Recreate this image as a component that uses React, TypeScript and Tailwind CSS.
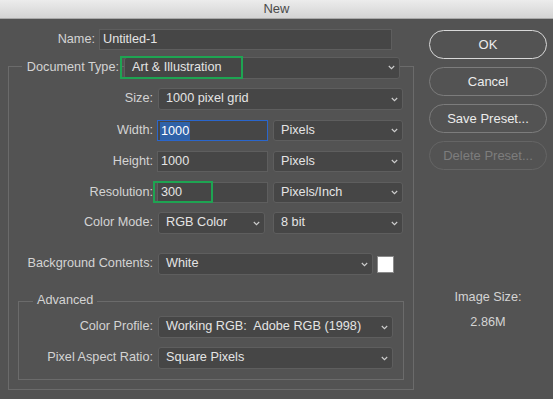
import React from "react";

const font = { fontFamily: '"Liberation Sans", Arial, sans-serif' };

function Chevron() {
  return (
    <svg width="7" height="5" viewBox="0 0 7 5" className="shrink-0">
      <path d="M0.8 1 L3.5 3.7 L6.2 1" fill="none" stroke="#cfcfcf" strokeWidth="1.1" />
    </svg>
  );
}

function Select({ w, text, h = "h-[22px]" }: { w: string; text: string; h?: string }) {
  return (
    <div
      className={`${w} ${h} shrink-0 flex items-center justify-between rounded-[3px] border border-[#5e5e5e] bg-[#464646] pl-[7px] pr-[4px] text-[#e4e4e4]`}
    >
      <span className="whitespace-pre">{text}</span>
      <Chevron />
    </div>
  );
}

function Input({ w, children, blue = false }: { w: string; children: React.ReactNode; blue?: boolean }) {
  return (
    <div
      className={`${w} h-[21px] shrink-0 flex items-center border ${
        blue ? "border-[#2a66cc]" : "border-[#5e5e5e]"
      } bg-[#464646] pl-[2px] text-[#e4e4e4]`}
    >
      {children}
    </div>
  );
}

function Label({ w, children }: { w: string; children: React.ReactNode }) {
  return <div className={`${w} shrink-0 text-right text-[#d4d4d4] whitespace-nowrap`}>{children}</div>;
}

function Button({ children, variant }: { children: React.ReactNode; variant: "default" | "normal" | "disabled" }) {
  const cls =
    variant === "default"
      ? "border-[#d8d8d8] text-[#ececec]"
      : variant === "normal"
      ? "border-[#7c7c7c] text-[#ececec]"
      : "border-[#656565] text-[#7d7d7d]";
  return (
    <div className={`h-[29px] w-[118px] rounded-full border ${cls} flex items-center justify-center text-[13px]`}>
      {children}
    </div>
  );
}

export default function App() {
  return (
    <div style={font} className="w-[553px] h-[399px] bg-[#535353] flex flex-col text-[12.7px] overflow-hidden">
      {/* Title bar */}
      <div className="h-[19px] shrink-0 bg-gradient-to-b from-[#ececec] to-[#d4d4d4] border-b border-[#a9a9a9] flex items-center justify-center text-[13px] text-[#4a4a4a]">
        New
      </div>

      <div className="flex flex-1">
        {/* Left column */}
        <div className="w-[414px] shrink-0 flex flex-col pt-[10px]">
          {/* Name row */}
          <div className="flex items-center h-[21px]">
            <Label w="w-[95px]">Name:</Label>
            <div className="ml-[4px] w-[293px] h-[21px] flex items-center border border-[#5e5e5e] bg-[#464646] pl-[3px] text-[#e4e4e4]">
              Untitled-1
            </div>
          </div>

          {/* Outer group box */}
          <div className="ml-[8px] mt-[16px] w-[406px] h-[324px] shrink-0 border border-[#6b6b6b] flex flex-col">
            {/* Document type row (legend) */}
            <div className="relative -mt-[11px] flex items-center h-[23px] shrink-0">
              <div className="ml-[13px] w-[98px] pr-[1px] text-right bg-[#535353] text-[#d4d4d4] whitespace-nowrap">
                Document Type:
              </div>
              <div className="ml-[4px]">
                <Select w="w-[276px]" text="Art & Illustration" h="h-[22px]" />
              </div>
              <div className="absolute left-[111px] top-0 w-[123px] h-[23px] border-2 border-[#1ea452] pointer-events-none" />
            </div>

            {/* Size */}
            <div className="mt-[9px] flex items-center h-[22px] shrink-0">
              <Label w="w-[144px]">Size:</Label>
              <div className="ml-[5px]">
                <Select w="w-[245px]" text="1000 pixel grid" />
              </div>
            </div>

            {/* Width */}
            <div className="mt-[10px] flex items-center h-[21px] shrink-0">
              <Label w="w-[144px]">Width:</Label>
              <div className="ml-[4px]">
                <Input w="w-[111px]" blue>
                  <span className="bg-[#2f62a8] text-white px-[1px] leading-[18px]">1000</span>
                </Input>
              </div>
              <div className="ml-[5px]">
                <Select w="w-[130px]" text="Pixels" h="h-[21px]" />
              </div>
            </div>

            {/* Height */}
            <div className="mt-[10px] flex items-center h-[21px] shrink-0">
              <Label w="w-[144px]">Height:</Label>
              <div className="ml-[4px]">
                <Input w="w-[111px]">
                  <span className="px-[1px]">1000</span>
                </Input>
              </div>
              <div className="ml-[5px]">
                <Select w="w-[130px]" text="Pixels" h="h-[21px]" />
              </div>
            </div>

            {/* Resolution */}
            <div className="relative mt-[10px] flex items-center h-[21px] shrink-0">
              <Label w="w-[144px]">Resolution:</Label>
              <div className="ml-[4px]">
                <Input w="w-[111px]">
                  <span className="px-[1px]">300</span>
                </Input>
              </div>
              <div className="ml-[5px]">
                <Select w="w-[130px]" text="Pixels/Inch" h="h-[21px]" />
              </div>
              <div className="absolute left-[144px] -top-[1px] w-[60px] h-[22px] border-2 border-[#1ea452] pointer-events-none" />
            </div>

            {/* Color Mode */}
            <div className="mt-[9px] flex items-center h-[22px] shrink-0">
              <Label w="w-[144px]">Color Mode:</Label>
              <div className="ml-[5px]">
                <Select w="w-[107px]" text="RGB Color" />
              </div>
              <div className="ml-[8px]">
                <Select w="w-[130px]" text="8 bit" />
              </div>
            </div>

            {/* Background */}
            <div className="mt-[19px] flex items-center h-[22px] shrink-0">
              <Label w="w-[144px]">Background Contents:</Label>
              <div className="ml-[5px]">
                <Select w="w-[215px]" text="White" />
              </div>
              <div className="ml-[4px] w-[17px] h-[17px] bg-white border border-[#8a8a8a]" />
            </div>

            {/* Advanced box */}
            <div className="ml-[9px] mt-[26px] w-[386px] h-[79px] shrink-0 border border-[#6b6b6b] flex flex-col">
              <div className="-mt-[9px] flex h-[16px] items-center shrink-0">
                <div className="ml-[14px] px-[4px] bg-[#535353] text-[#d4d4d4]">Advanced</div>
              </div>
              <div className="mt-[7px] flex items-center h-[22px] shrink-0">
                <Label w="w-[134px]">Color Profile:</Label>
                <div className="ml-[5px]">
                  <Select w="w-[235px]" text="Working RGB:  Adobe RGB (1998)" />
                </div>
              </div>
              <div className="mt-[9px] flex items-center h-[22px] shrink-0">
                <Label w="w-[134px]">Pixel Aspect Ratio:</Label>
                <div className="ml-[5px]">
                  <Select w="w-[235px]" text="Square Pixels" />
                </div>
              </div>
            </div>
          </div>
        </div>

        {/* Right column */}
        <div className="flex-1 flex flex-col pl-[15px] pt-[11px]">
          <div className="w-[118px] flex flex-col gap-[8px]">
            <Button variant="default">OK</Button>
            <Button variant="normal">Cancel</Button>
            <Button variant="normal">Save Preset...</Button>
            <Button variant="disabled">Delete Preset...</Button>
          </div>
          <div className="w-[118px] mt-[119px] flex flex-col items-center text-[#d4d4d4]">
            <div className="leading-[16px]">Image Size:</div>
            <div className="leading-[16px] mt-[9px]">2.86M</div>
          </div>
        </div>
      </div>
    </div>
  );
}
